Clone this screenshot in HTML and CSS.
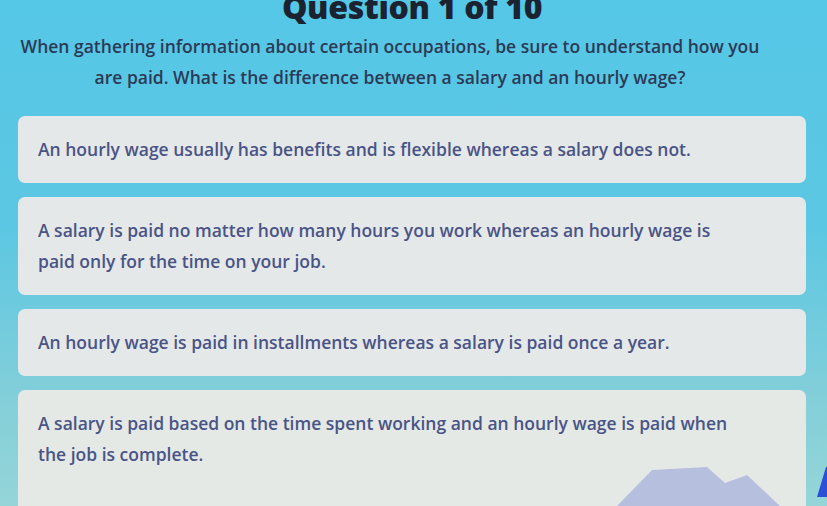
FILE: index.html
```html
<!DOCTYPE html>
<html lang="en">
<head>
<meta charset="utf-8">
<title>Question 1 of 10</title>
<link rel="stylesheet" href="styles.css">
</head>
<body>
<main class="quiz">
  <h1 class="quiz-title">Question 1 of 10</h1>
  <p class="quiz-question">When gathering information about certain occupations, be sure to understand how you are paid. What is the difference between a salary and an hourly wage?</p>
  <ul class="answers">
    <li class="answer">An hourly wage usually has benefits and is flexible whereas a salary does not.</li>
    <li class="answer">A salary is paid no matter how many hours you work whereas an hourly wage is paid only for the time on your job.</li>
    <li class="answer">An hourly wage is paid in installments whereas a salary is paid once a year.</li>
    <li class="answer answer-last">A salary is paid based on the time spent working and an hourly wage is paid when the job is complete.
      <svg class="mountains" width="165" height="50" viewBox="0 0 165 50" aria-hidden="true">
        <polygon points="0,50 35,14 90,11 108,27 130,19 163,50" fill="#b7bfdf"/>
      </svg>
    </li>
  </ul>
  <svg class="corner" width="10" height="30" viewBox="0 0 10 30" aria-hidden="true">
    <polygon points="0,30 9,0 10,0 10,30" fill="#2b4fd6"/>
  </svg>
</main>
</body>
</html>
```

FILE: styles.css
```css
html, body {
  margin: 0;
  padding: 0;
  height: 100%;
  overflow: hidden;
}

body {
  background: linear-gradient(180deg, #55c7e7 0%, #5cc7e2 45%, #84cfd9 80%, #95d5d8 100%);
  font-family: "Open Sans", Roboto, "Liberation Sans", sans-serif;
}

.quiz {
  position: relative;
  height: 100%;
  padding: 0 21px 0 18px;
  box-sizing: border-box;
}

.quiz-title {
  margin: -9px 0 0;
  font-size: 32px;
  line-height: 32px;
  font-weight: 800;
  color: #1b2331;
  text-align: center;
  letter-spacing: -0.3px;
}

.quiz-question {
  margin: 8px 0 0;
  padding: 0 44px 0 0;
  font-size: 17.5px;
  line-height: 31px;
  font-weight: 600;
  color: #2d3a55;
  text-align: center;
}

.answers {
  list-style: none;
  margin: 23px 0 0;
  padding: 0;
  display: flex;
  flex-direction: column;
  gap: 14px;
}

.answer {
  position: relative;
  background: #e5e8e8;
  border-radius: 7px;
  padding: 18px 72px 18px 20px;
  font-size: 17.5px;
  line-height: 31px;
  font-weight: 600;
  color: #4a5486;
}

.answer-last {
  min-height: 140px;
  background: #e4e9e6;
}

.mountains {
  position: absolute;
  right: 24px;
  top: 66px;
}

.corner {
  position: absolute;
  right: 0;
  bottom: 0;
}
```
